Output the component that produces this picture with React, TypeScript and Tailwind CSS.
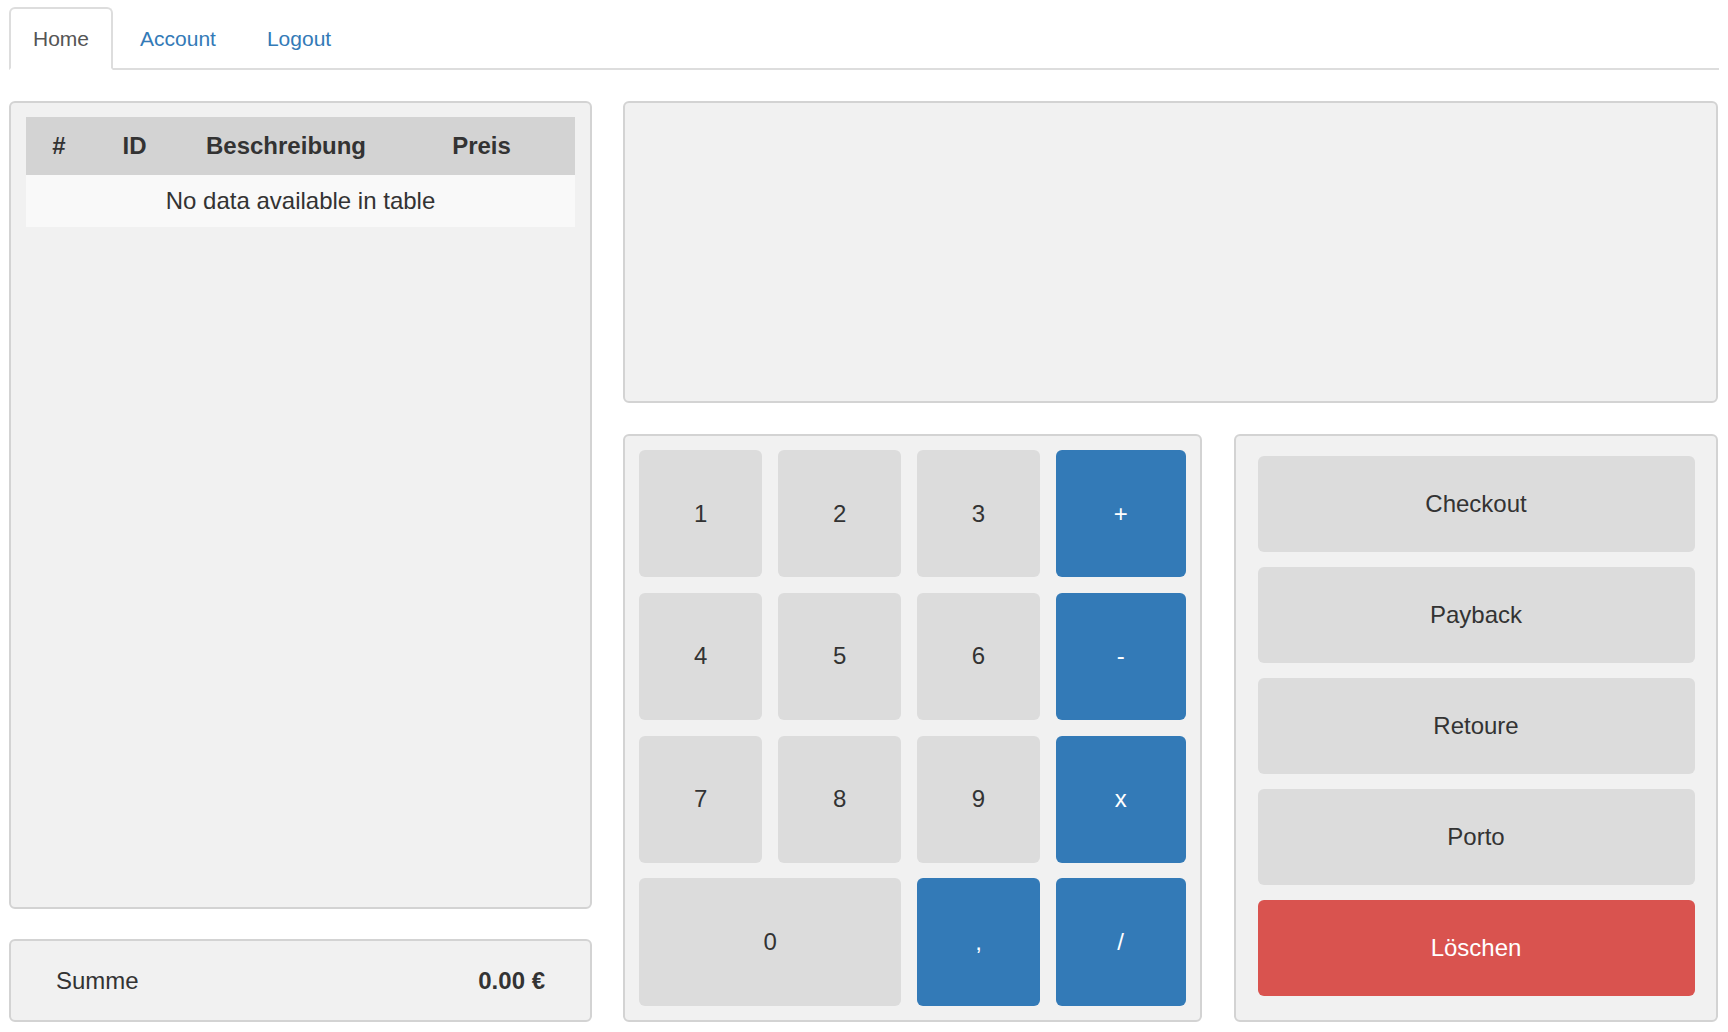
import React from "react";

const keys: { label: string; blue?: boolean; span?: boolean }[] = [
  { label: "1" },
  { label: "2" },
  { label: "3" },
  { label: "+", blue: true },
  { label: "4" },
  { label: "5" },
  { label: "6" },
  { label: "-", blue: true },
  { label: "7" },
  { label: "8" },
  { label: "9" },
  { label: "x", blue: true },
  { label: "0", span: true },
  { label: ",", blue: true },
  { label: "/", blue: true },
];

const actions = ["Checkout", "Payback", "Retoure", "Porto"];

export default function App() {
  return (
    <div className="w-[1728px] h-[1032px] overflow-hidden bg-white text-[#333] font-['Liberation_Sans',Arial,sans-serif]">
      <nav className="pt-[7px] px-[9px]">
        <ul className="flex h-[63px] border-b-2 border-[#ddd]">
          <li className="h-[63px] flex items-center px-[22px] border-2 border-[#ddd] border-b-white bg-white rounded-t-[6px] text-[21px] text-[#555]">
            Home
          </li>
          <li className="ml-[3px] h-[63px] flex items-center px-[22px] border-2 border-transparent text-[21px] text-[#337ab7]">
            Account
          </li>
          <li className="ml-[3px] h-[63px] flex items-center px-[22px] border-2 border-transparent text-[21px] text-[#337ab7]">
            Logout
          </li>
        </ul>
      </nav>

      <main className="mt-[31px] px-[9px] flex gap-[31px]">
        <div className="w-[583px] flex flex-col gap-[30px]">
          <section className="h-[808px] border-2 border-[#d3d3d3] rounded-[6px] bg-[#f1f1f1] pt-[14px] px-[15px]">
            <div className="w-full text-[24px]">
              <div className="flex h-[58px] items-center bg-[#d3d3d3] font-bold">
                <div className="w-[66px] text-center">#</div>
                <div className="w-[85px] text-center">ID</div>
                <div className="w-[218px] text-center">Beschreibung</div>
                <div className="flex-1 text-center pr-[7px]">Preis</div>
              </div>
              <div className="flex h-[52px] items-center justify-center bg-[#f9f9f9]">
                No data available in table
              </div>
            </div>
          </section>
          <section className="h-[83px] border-2 border-[#d3d3d3] rounded-[6px] bg-[#f1f1f1] flex items-center justify-between px-[45px] text-[24px]">
            <span>Summe</span>
            <span className="font-bold">0.00 €</span>
          </section>
        </div>

        <div className="w-[1095px] flex flex-col gap-[31px]">
          <section className="h-[302px] border-2 border-[#d3d3d3] rounded-[6px] bg-[#f1f1f1]" />
          <div className="flex gap-[32px]">
            <section className="w-[579px] h-[588px] border-2 border-[#d3d3d3] rounded-[6px] bg-[#f1f1f1] pt-[14px] pl-[14px]">
              <div className="grid grid-cols-[123.4px_123.4px_123.4px_130px] auto-rows-[127.3px] gap-x-[15.5px] gap-y-[15.5px] text-[24px]">
                {keys.map((k) => (
                  <div
                    key={k.label}
                    className={
                      (k.span ? "col-span-2 " : "") +
                      (k.blue ? "bg-[#337ab7] text-white " : "bg-[#dcdcdc] text-[#333] ") +
                      "rounded-[6px] flex items-center justify-center"
                    }
                  >
                    {k.label}
                  </div>
                ))}
              </div>
            </section>
            <section className="w-[484px] h-[588px] border-2 border-[#d3d3d3] rounded-[6px] bg-[#f1f1f1] pt-[20px] px-[21.5px] flex flex-col gap-[15px] text-[24px]">
              {actions.map((a) => (
                <div
                  key={a}
                  className="h-[96px] shrink-0 rounded-[6px] bg-[#dcdcdc] flex items-center justify-center text-[#333]"
                >
                  {a}
                </div>
              ))}
              <div className="h-[96px] shrink-0 rounded-[6px] bg-[#d9534f] flex items-center justify-center text-white">
                Löschen
              </div>
            </section>
          </div>
        </div>
      </main>
    </div>
  );
}
